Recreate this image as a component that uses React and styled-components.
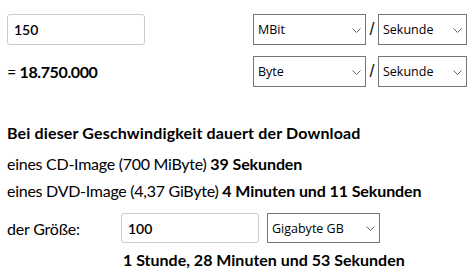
import React from "react";
import styled, { createGlobalStyle } from "styled-components";

const GlobalStyle = createGlobalStyle`
  body {
    margin: 0;
    background: #fff;
    color: #000;
    font-family: "Source Sans Pro", Lato, "Open Sans", sans-serif;
  }
`;

const Page = styled.div`
  padding: 14px 7px 0 7px;
`;

const UnitGrid = styled.div`
  display: grid;
  grid-template-columns: 246px 113px 12px 89px;
  grid-auto-rows: 31px;
  row-gap: 11px;
  align-items: center;
`;

const TextInput = styled.input`
  box-sizing: border-box;
  width: 138px;
  height: ${(p) => p.$h || 31}px;
  border: 1px solid #ccc;
  border-radius: 3px;
  padding: 0 6px;
  font-family: inherit;
  font-size: 14px;
  font-weight: 600;
  color: #000;
  outline: none;
`;

const Result = styled.div`
  font-size: 16px;
  font-weight: 700;
  letter-spacing: -0.4px;
  span {
    font-weight: 400;
  }
`;

const SelectWrap = styled.div`
  position: relative;
  width: ${(p) => p.$w}px;
  height: ${(p) => p.$h || 31}px;
`;

const Select = styled.select`
  appearance: none;
  box-sizing: border-box;
  width: 100%;
  height: 100%;
  border: 1px solid #767676;
  border-radius: 0;
  background: #fff;
  padding: 0 20px 0 4px;
  font-family: "Open Sans", "Noto Sans", sans-serif;
  font-size: 12.5px;
  color: #000;
  outline: none;
`;

const Chevron = styled.svg`
  position: absolute;
  right: 5px;
  top: 50%;
  margin-top: -2px;
  pointer-events: none;
`;

const Slash = styled.div`
  text-align: center;
  font-family: "Liberation Sans", sans-serif;
  font-size: 18px;
  font-weight: 300;
  color: #222;
`;

const Heading = styled.div`
  margin-top: 36px;
  font-size: 16px;
  font-weight: 700;
  line-height: 20px;
  letter-spacing: 0.15px;
`;

const Line = styled.div`
  margin-top: ${(p) => p.$mt}px;
  font-size: 16px;
  line-height: 20px;
  letter-spacing: -0.27px;
  b {
    font-weight: 700;
    letter-spacing: -0.1px;
  }
`;

const SizeRow = styled.div`
  display: flex;
  align-items: center;
  margin-top: 12px;
`;

const Label = styled.div`
  width: 114px;
  font-size: 16px;
  letter-spacing: -0.2px;
`;

const Spacer = styled.div`
  width: ${(p) => p.$w}px;
`;

const Answer = styled.div`
  margin: 7px 0 0 116px;
  font-size: 16px;
  font-weight: 700;
  line-height: 20px;
`;

function Dropdown({ width, height, value, options }) {
  return (
    <SelectWrap $w={width} $h={height}>
      <Select defaultValue={value}>
        {options.map((o) => (
          <option key={o}>{o}</option>
        ))}
      </Select>
      <Chevron width="9" height="5" viewBox="0 0 9 5">
        <path d="M0.5 0.5 L4.5 4.5 L8.5 0.5" fill="none" stroke="#666" strokeWidth="1" />
      </Chevron>
    </SelectWrap>
  );
}

const rateUnits = ["Bit", "KBit", "MBit", "GBit", "Byte", "KByte", "MByte", "GByte"];
const timeUnits = ["Sekunde", "Minute", "Stunde"];
const sizeUnits = ["Megabyte MB", "Gigabyte GB", "Terabyte TB"];

export default function App() {
  return (
    <Page>
      <GlobalStyle />
      <UnitGrid>
        <TextInput defaultValue="150" />
        <Dropdown width={113} value="MBit" options={rateUnits} />
        <Slash>/</Slash>
        <Dropdown width={89} value="Sekunde" options={timeUnits} />
        <Result>
          <span>= </span>18.750.000
        </Result>
        <Dropdown width={113} value="Byte" options={rateUnits} />
        <Slash>/</Slash>
        <Dropdown width={89} value="Sekunde" options={timeUnits} />
      </UnitGrid>
      <Heading>Bei dieser Geschwindigkeit dauert der Download</Heading>
      <Line $mt={11}>
        eines CD-Image (700 MiByte) <b>39 Sekunden</b>
      </Line>
      <Line $mt={7}>
        eines DVD-Image (4,37 GiByte) <b>4 Minuten und 11 Sekunden</b>
      </Line>
      <SizeRow>
        <Label>der Größe:</Label>
        <TextInput defaultValue="100" $h={30} />
        <Spacer $w={8} />
        <Dropdown width={113} height={30} value="Gigabyte GB" options={sizeUnits} />
      </SizeRow>
      <Answer>1 Stunde, 28 Minuten und 53 Sekunden</Answer>
    </Page>
  );
}
